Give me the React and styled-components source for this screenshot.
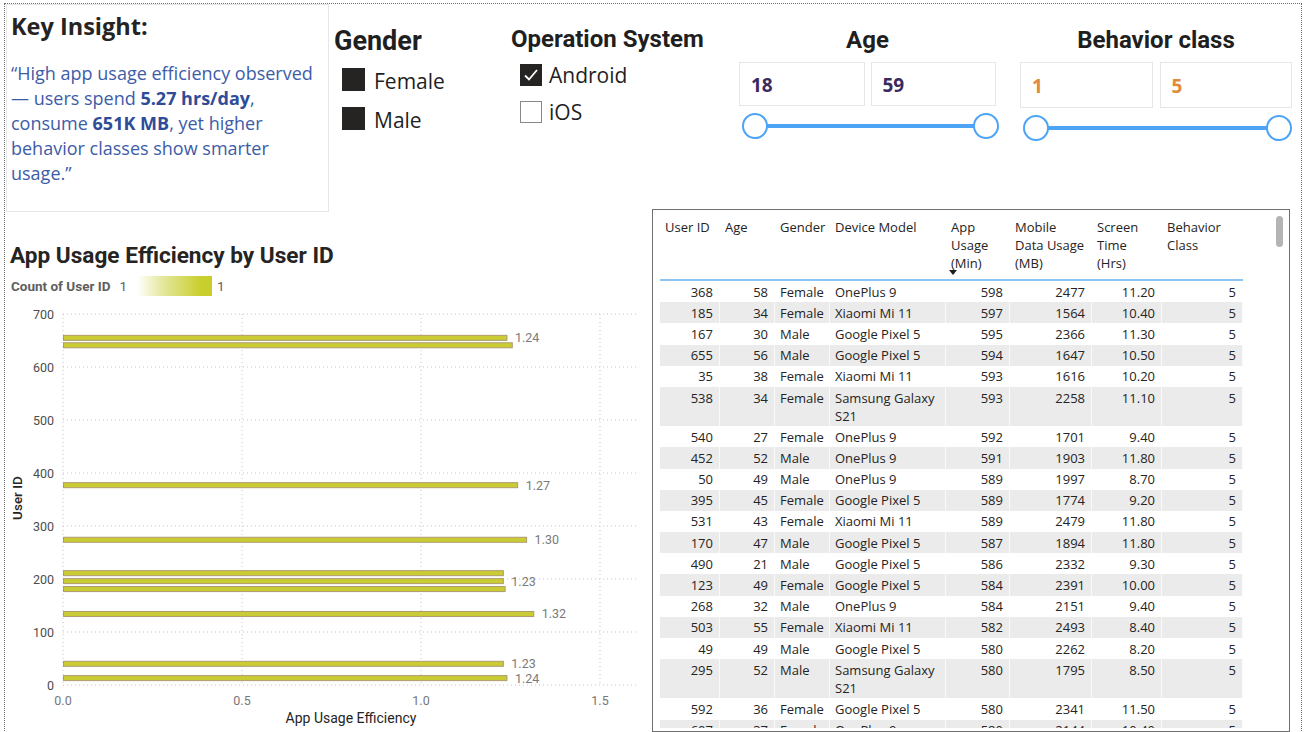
import React from "react";
import styled, { createGlobalStyle } from "styled-components";

const GlobalStyle = createGlobalStyle`
  html, body { margin: 0; padding: 0; background: #fff; }
  body { font-family: "Open Sans", "Segoe UI", sans-serif; color: #252423; overflow: hidden; }
  * { box-sizing: border-box; }
`;

const Viewport = styled.div`
  width: 1305px;
  height: 732px;
  overflow: hidden;
  background: #fff;
`;

const Frame = styled.div`
  margin: 3px 0 0 4px;
  width: 1298px;
  height: 780px;
  border: 1px dotted #6e6e6e;
  display: flex;
  flex-direction: column;
`;

const TopRow = styled.div`
  display: flex;
  align-items: flex-start;
  height: 205px;
  flex-shrink: 0;
`;

const InsightCard = styled.div`
  margin-left: 1px;
  width: 323px;
  height: 208px;
  flex-shrink: 0;
  border: 1px solid #e6e6e6;
  padding: 0 0 0 4px;
  background: #fff;
`;

const InsightTitle = styled.div`
  margin-top: 5px;
  font-family: "Open Sans", sans-serif;
  font-weight: 700;
  font-size: 23.5px;
  line-height: 32px;
  color: #252423;
`;

const InsightQuote = styled.p`
  margin: 19px 0 0 0;
  font-family: "Open Sans", sans-serif;
  font-size: 18px;
  line-height: 25px;
  color: #3d5ca8;
  white-space: nowrap;

  b {
    font-weight: 700;
    color: #2f4c99;
  }
`;

const Slicer = styled.div`
  margin-left: ${(p) => p.$ml}px;
  width: ${(p) => p.$w}px;
  flex-shrink: 0;
  display: flex;
  flex-direction: column;
`;

const SlicerTitle = styled.div`
  margin-top: ${(p) => p.$mt ?? 21}px;
  font-family: Roboto, "Liberation Sans", sans-serif;
  font-weight: 700;
  font-size: ${(p) => p.$size ?? 24}px;
  line-height: ${(p) => p.$lh ?? 28}px;
  color: #1f1f1f;
  text-align: ${(p) => (p.$center ? "center" : "left")};
  white-space: nowrap;
`;

const OptionList = styled.div`
  display: flex;
  flex-direction: column;
  gap: ${(p) => p.$gap}px;
  margin-top: 11px;
  padding-left: ${(p) => p.$pl}px;
`;

const Option = styled.div`
  display: flex;
  align-items: flex-start;
  gap: ${(p) => p.$gap}px;
  height: ${(p) => p.$h}px;
  font-family: "Open Sans", sans-serif;
  font-size: 21px;
  color: #1f1f1f;
`;

const OptionLabel = styled.span`
  line-height: ${(p) => p.$h}px;
  padding-top: ${(p) => p.$drop}px;
`;

const Swatch = styled.span`
  width: 23px;
  height: 23px;
  background: #252423;
  flex-shrink: 0;
`;

const CheckBox = styled.span`
  width: 22px;
  height: 22px;
  flex-shrink: 0;
  display: flex;
  align-items: center;
  justify-content: center;
  background: ${(p) => (p.$checked ? "#252423" : "#fff")};
  border: 1px solid ${(p) => (p.$checked ? "#252423" : "#8a8886")};
`;

const BoxRow = styled.div`
  display: flex;
  gap: ${(p) => p.$gap}px;
  margin-top: ${(p) => p.$mt}px;
`;

const NumberBox = styled.div`
  flex: 1;
  height: ${(p) => p.$h}px;
  border: 1px solid #e6e6e6;
  display: flex;
  align-items: center;
  padding: 1px 0 0 11px;
  font-family: "Open Sans", sans-serif;
  font-weight: 700;
  font-size: 19px;
  color: ${(p) => p.$color};
`;

const SliderRow = styled.div`
  display: flex;
  align-items: center;
  margin-top: 7px;
  margin-left: 3px;
  width: ${(p) => p.$w}px;
`;

const Knob = styled.span`
  width: 26px;
  height: 26px;
  border-radius: 50%;
  border: 2px solid #4da3f5;
  background: #fff;
  flex-shrink: 0;
  position: relative;
  z-index: 1;
`;

const Track = styled.span`
  flex: 1;
  height: 4px;
  background: #4da3f5;
  margin: 0 -1px;
`;

const BottomRow = styled.div`
  display: flex;
  align-items: flex-start;
  flex: 1;
`;

const ChartCol = styled.div`
  width: 647px;
  flex-shrink: 0;
  display: flex;
  flex-direction: column;
`;

const ChartTitle = styled.div`
  margin-top: 33px;
  padding-left: 5px;
  font-family: Roboto, "Liberation Sans", sans-serif;
  font-weight: 700;
  font-size: 22.6px;
  line-height: 28px;
  color: #252423;
  white-space: nowrap;
`;

const Legend = styled.div`
  display: flex;
  align-items: center;
  height: 20px;
  margin-top: 6px;
  padding-left: 6px;
  font-family: Roboto, "Liberation Sans", sans-serif;
  font-size: 13.5px;
  color: #605e5c;
`;

const LegendLabel = styled.span`
  font-weight: 700;
  margin-right: 9px;
`;

const GradientBar = styled.span`
  width: 75px;
  height: 20px;
  margin: 0 5px 0 10px;
  background: linear-gradient(to right, #ffffff 0%, #e4e79a 35%, #c9cf2e 85%, #c7cd2a 100%);
`;

const ChartSvg = styled.svg`
  display: block;
  margin-top: 6px;
`;

const TableBox = styled.div`
  position: relative;
  width: 638px;
  height: 523px;
  flex-shrink: 0;
  border: 1px solid #6f6f6f;
  padding: 8px 0 0 7px;
  background: #fff;
  overflow: hidden;
`;

const TableClip = styled.div`
  height: 510px;
  overflow: hidden;
`;

const Table = styled.table`
  width: 583px;
  table-layout: fixed;
  border-collapse: separate;
  border-spacing: 0;
  font-family: "Open Sans", sans-serif;
  font-size: 13px;
  color: #252423;
`;

const HeadCell = styled.th`
  position: relative;
  padding: 0 6px 7px 5px;
  text-align: left;
  vertical-align: top;
  font-weight: 400;
  line-height: 18px;
  border-bottom: 2px solid #8cc6f7;
`;

const SortArrow = styled.span`
  position: absolute;
  left: 3px;
  bottom: 4px;
  width: 0;
  height: 0;
  border-left: 4.5px solid transparent;
  border-right: 4.5px solid transparent;
  border-top: 5px solid #1f1f1f;
`;

const Row = styled.tr`
  background: ${(p) => (p.$alt ? "#ebebeb" : "#ffffff")};
`;

const Cell = styled.td`
  padding: 1.6px 6px 1.6px 5px;
  text-align: ${(p) => (p.$right ? "right" : "left")};
  vertical-align: top;
  line-height: 18px;
  border-right: 1px solid rgba(255, 255, 255, 0.75);
  white-space: ${(p) => (p.$wrap ? "normal" : "nowrap")};
`;

const ScrollThumb = styled.span`
  position: absolute;
  top: 6px;
  right: 6px;
  width: 7px;
  height: 31px;
  border-radius: 4px;
  background: #b4b4b4;
`;

const columns = [
  { w: 60, head: ["User ID"], right: true },
  { w: 55, head: ["Age"], right: true },
  { w: 55, head: ["Gender"] },
  { w: 116, head: ["Device Model"], wrap: true },
  { w: 64, head: ["App", "Usage", "(Min)"], right: true, sort: true },
  { w: 82, head: ["Mobile", "Data Usage", "(MB)"], right: true },
  { w: 70, head: ["Screen", "Time", "(Hrs)"], right: true },
  { w: 81, head: ["Behavior", "Class"], right: true },
];

const rows = [
  [368, 58, "Female", "OnePlus 9", 598, 2477, "11.20", 5],
  [185, 34, "Female", "Xiaomi Mi 11", 597, 1564, "10.40", 5],
  [167, 30, "Male", "Google Pixel 5", 595, 2366, "11.30", 5],
  [655, 56, "Male", "Google Pixel 5", 594, 1647, "10.50", 5],
  [35, 38, "Female", "Xiaomi Mi 11", 593, 1616, "10.20", 5],
  [538, 34, "Female", "Samsung Galaxy S21", 593, 2258, "11.10", 5],
  [540, 27, "Female", "OnePlus 9", 592, 1701, "9.40", 5],
  [452, 52, "Male", "OnePlus 9", 591, 1903, "11.80", 5],
  [50, 49, "Male", "OnePlus 9", 589, 1997, "8.70", 5],
  [395, 45, "Female", "Google Pixel 5", 589, 1774, "9.20", 5],
  [531, 43, "Female", "Xiaomi Mi 11", 589, 2479, "11.80", 5],
  [170, 47, "Male", "Google Pixel 5", 587, 1894, "11.80", 5],
  [490, 21, "Male", "Google Pixel 5", 586, 2332, "9.30", 5],
  [123, 49, "Female", "Google Pixel 5", 584, 2391, "10.00", 5],
  [268, 32, "Male", "OnePlus 9", 584, 2151, "9.40", 5],
  [503, 55, "Female", "Xiaomi Mi 11", 582, 2493, "8.40", 5],
  [49, 49, "Male", "Google Pixel 5", 580, 2262, "8.20", 5],
  [295, 52, "Male", "Samsung Galaxy S21", 580, 1795, "8.50", 5],
  [592, 36, "Female", "Google Pixel 5", 580, 2341, "11.50", 5],
  [607, 37, "Female", "OnePlus 9", 580, 2144, "10.40", 5],
];

const yOf = (id) => 685 - id * 0.53;
const xOf = (e) => 63 + e * 358;

const bars = [
  { id: 655, v: 1.24, label: "1.24" },
  { id: 641, v: 1.255 },
  { id: 377, v: 1.27, label: "1.27" },
  { id: 274, v: 1.295, label: "1.30" },
  { id: 211, v: 1.23 },
  { id: 196, v: 1.23, label: "1.23" },
  { id: 181, v: 1.235 },
  { id: 134, v: 1.315, label: "1.32" },
  { id: 40, v: 1.23, label: "1.23" },
  { id: 13, v: 1.24, label: "1.24" },
];

const yTicks = [700, 600, 500, 400, 300, 200, 100, 0];
const xTicks = [
  { v: 0, t: "0.0" },
  { v: 0.5, t: "0.5" },
  { v: 1, t: "1.0" },
  { v: 1.5, t: "1.5" },
];

function EfficiencyChart() {
  const font = "Roboto, 'Liberation Sans', sans-serif";
  return (
    <ChartSvg width="647" height="430" viewBox="5 302 647 430">
      {yTicks.map((t) => (
        <line
          key={"h" + t}
          x1="63"
          x2="636"
          y1={yOf(t)}
          y2={yOf(t)}
          stroke="#c6c6c6"
          strokeWidth="1"
          strokeDasharray="1 3"
        />
      ))}
      {xTicks.map((t) => (
        <line
          key={"v" + t.t}
          x1={xOf(t.v)}
          x2={xOf(t.v)}
          y1="314"
          y2="685"
          stroke="#c6c6c6"
          strokeWidth="1"
          strokeDasharray="1 3"
        />
      ))}
      {yTicks.map((t) => (
        <text
          key={"yl" + t}
          x="54"
          y={yOf(t) + 4.5}
          textAnchor="end"
          fontFamily={font}
          fontSize="12.5"
          fill="#4d4d4d"
        >
          {t}
        </text>
      ))}
      {xTicks.map((t) => (
        <text
          key={"xl" + t.t}
          x={xOf(t.v)}
          y="704.5"
          textAnchor="middle"
          fontFamily={font}
          fontSize="12.5"
          fill="#777"
        >
          {t.t}
        </text>
      ))}
      {bars.map((b) => (
        <rect
          key={"b" + b.id}
          x="63.5"
          y={yOf(b.id) - 2.5}
          width={xOf(b.v) - 63.5}
          height="5"
          fill="#c9cd33"
          stroke="#b09a70"
          strokeWidth="1"
        />
      ))}
      {bars
        .filter((b) => b.label)
        .map((b) => (
          <text
            key={"dl" + b.id}
            x={xOf(b.v) + 8}
            y={yOf(b.id) + 4.5}
            fontFamily={font}
            fontSize="12.5"
            fill="#7a7a7a"
          >
            {b.label}
          </text>
        ))}
      <text
        x="18"
        y="498"
        transform="rotate(-90 18 498)"
        textAnchor="middle"
        dominantBaseline="middle"
        fontFamily={font}
        fontWeight="500"
        fontSize="13.5"
        fill="#252423"
      >
        User ID
      </text>
      <text
        x="351"
        y="723"
        textAnchor="middle"
        fontFamily={font}
        fontSize="14"
        fill="#252423"
      >
        App Usage Efficiency
      </text>
    </ChartSvg>
  );
}

function CheckIcon() {
  return (
    <svg width="16" height="14" viewBox="0 0 16 14">
      <path d="M2 7.5 L6 11.5 L14 2" fill="none" stroke="#fff" strokeWidth="1.8" />
    </svg>
  );
}

function RangeSlicer({ title, from, to, color, ml, w, sliderW, boxH, boxGap, boxMt }) {
  return (
    <Slicer $ml={ml} $w={w}>
      <SlicerTitle $center $mt={22}>{title}</SlicerTitle>
      <BoxRow $gap={boxGap} $mt={boxMt}>
        <NumberBox $h={boxH} $color={color}>{from}</NumberBox>
        <NumberBox $h={boxH} $color={color}>{to}</NumberBox>
      </BoxRow>
      <SliderRow $w={sliderW}>
        <Knob />
        <Track />
        <Knob />
      </SliderRow>
    </Slicer>
  );
}

export default function App() {
  return (
    <Viewport>
      <GlobalStyle />
      <Frame>
        <TopRow>
          <InsightCard>
            <InsightTitle>Key Insight:</InsightTitle>
            <InsightQuote>
              “High app usage efficiency observed
              <br />— users spend <b>5.27 hrs/day</b>,
              <br />consume <b>651K MB</b>, yet higher
              <br />behavior classes show smarter
              <br />usage.”
            </InsightQuote>
          </InsightCard>

          <Slicer $ml={5} $w={177}>
            <SlicerTitle $size={27} $lh={32} $mt={21}>Gender</SlicerTitle>
            <OptionList $gap={16} $pl={8}>
              <Option $gap={9} $h={23}>
                <Swatch />
                <OptionLabel $h={23} $drop={2}>Female</OptionLabel>
              </Option>
              <Option $gap={9} $h={23}>
                <Swatch />
                <OptionLabel $h={23} $drop={2}>Male</OptionLabel>
              </Option>
            </OptionList>
          </Slicer>

          <Slicer $ml={0} $w={228}>
            <SlicerTitle $mt={21}>Operation System</SlicerTitle>
            <OptionList $gap={15} $pl={9}>
              <Option $gap={7} $h={22}>
                <CheckBox $checked>
                  <CheckIcon />
                </CheckBox>
                <OptionLabel $h={22} $drop={0}>Android</OptionLabel>
              </Option>
              <Option $gap={7} $h={22}>
                <CheckBox />
                <OptionLabel $h={22} $drop={0}>iOS</OptionLabel>
              </Option>
            </OptionList>
          </Slicer>

          <RangeSlicer
            title="Age"
            from="18"
            to="59"
            color="#3b2a5e"
            ml={0}
            w={257}
            sliderW={257}
            boxH={44}
            boxGap={6}
            boxMt={8}
          />

          <RangeSlicer
            title="Behavior class"
            from="1"
            to="5"
            color="#e08a3c"
            ml={24}
            w={272}
            sliderW={269}
            boxH={46}
            boxGap={7}
            boxMt={8}
          />
        </TopRow>

        <BottomRow>
          <ChartCol>
            <ChartTitle>App Usage Efficiency by User ID</ChartTitle>
            <Legend>
              <LegendLabel>Count of User ID</LegendLabel>
              <span>1</span>
              <GradientBar />
              <span>1</span>
            </Legend>
            <EfficiencyChart />
          </ChartCol>

          <TableBox>
            <TableClip>
              <Table>
                <colgroup>
                  {columns.map((c, i) => (
                    <col key={i} style={{ width: c.w }} />
                  ))}
                </colgroup>
                <thead>
                  <tr>
                    {columns.map((c, i) => (
                      <HeadCell key={i}>
                        {c.head.map((line, j) => (
                          <React.Fragment key={j}>
                            {j > 0 && <br />}
                            {line}
                          </React.Fragment>
                        ))}
                        {c.sort && <SortArrow />}
                      </HeadCell>
                    ))}
                  </tr>
                </thead>
                <tbody>
                  {rows.map((r, i) => (
                    <Row key={i} $alt={i % 2 === 1}>
                      {r.map((v, j) => (
                        <Cell key={j} $right={columns[j].right} $wrap={columns[j].wrap}>
                          {v}
                        </Cell>
                      ))}
                    </Row>
                  ))}
                </tbody>
              </Table>
            </TableClip>
            <ScrollThumb />
          </TableBox>
        </BottomRow>
      </Frame>
    </Viewport>
  );
}
